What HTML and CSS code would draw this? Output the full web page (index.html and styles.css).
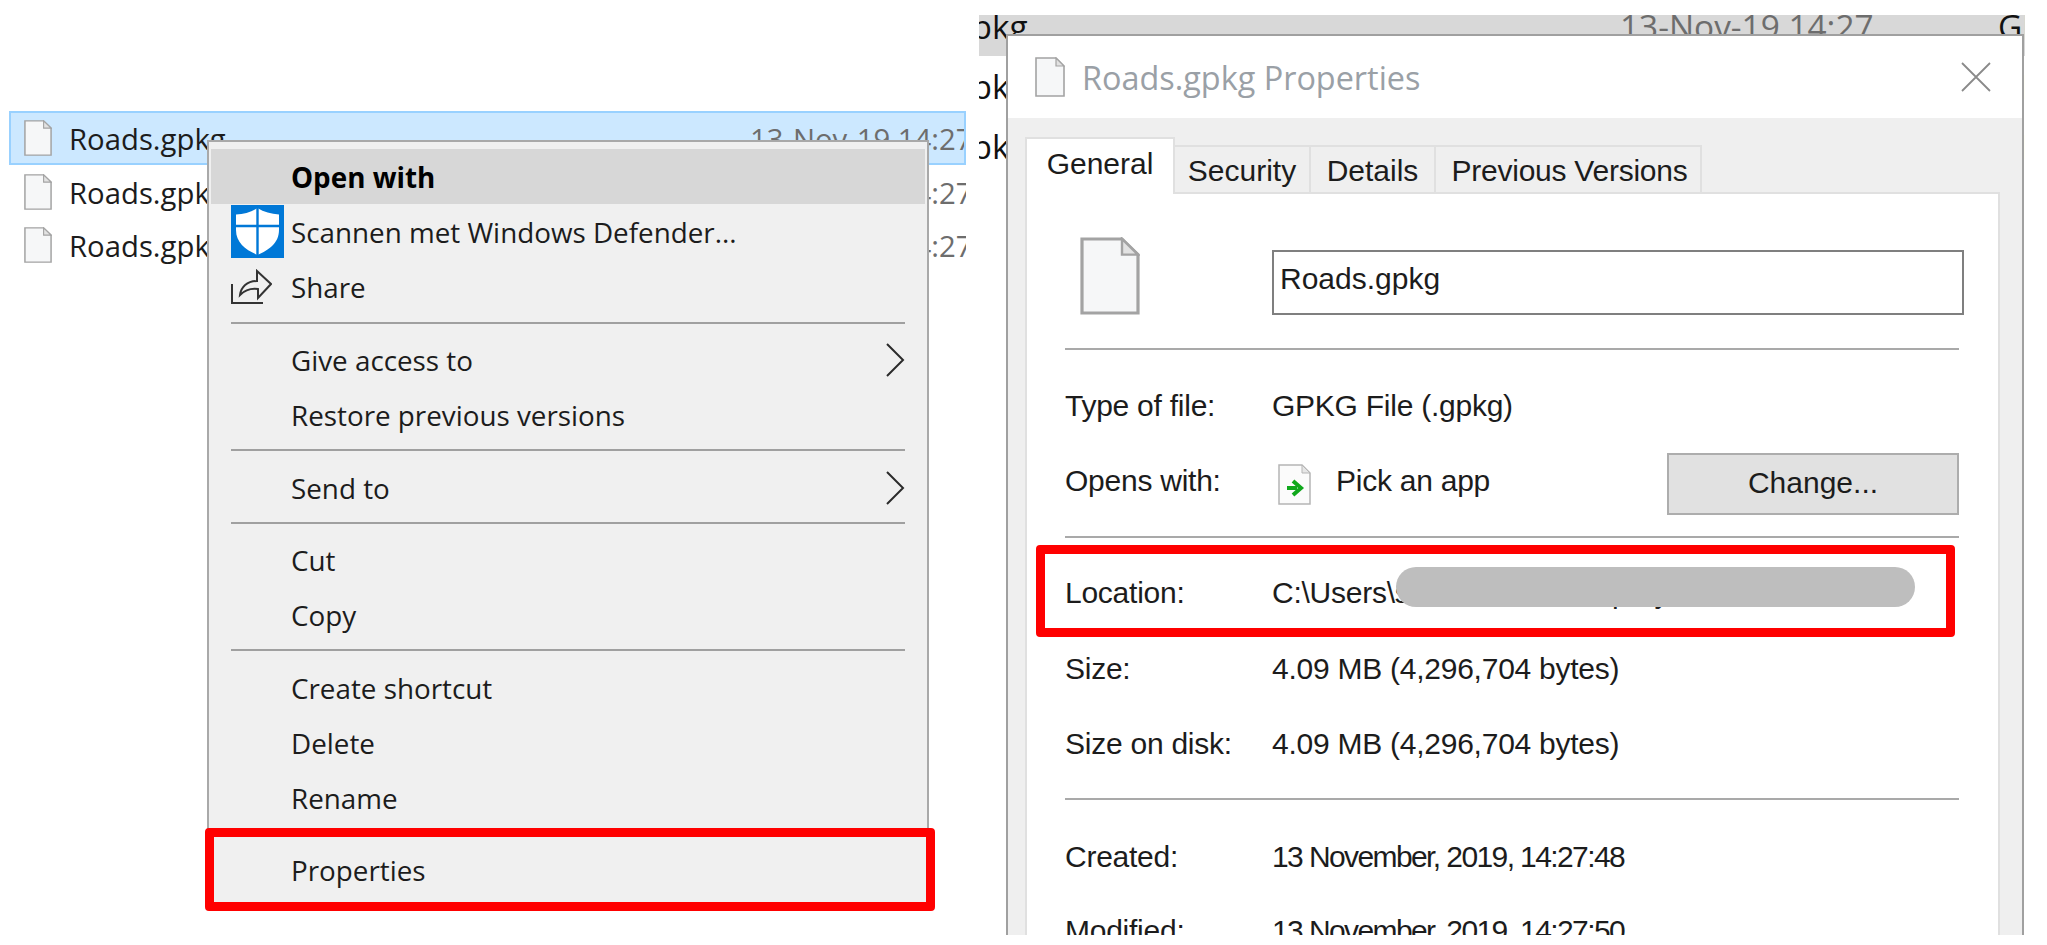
FILE: index.html
```html
<!DOCTYPE html>
<html lang="en">
<head>
<meta charset="utf-8">
<title>Roads.gpkg Properties</title>
<link rel="stylesheet" href="styles.css">
</head>
<body>
<svg class="defs" width="0" height="0" aria-hidden="true">
  <symbol id="page" viewBox="0 0 30 40" preserveAspectRatio="none">
    <path d="M1 1H21L29 9V39H1Z" fill="#f6f7f8" stroke="#a3a3a3" stroke-width="1.6"/>
    <path d="M21 1V9H29Z" fill="#e2e2e2" stroke="#a3a3a3" stroke-width="1.2"/>
  </symbol>
  <symbol id="chev" viewBox="0 0 20 34">
    <path d="M2 1L18 17L2 33" fill="none" stroke="#2b2b2b" stroke-width="2"/>
  </symbol>
</svg>
<main class="stage">
  <section class="shot-left">
    <div class="file-list">
      <div class="file-row selected">
        <svg class="file-icon"><use href="#page"/></svg>
        <span class="file-name">Roads.gpkg</span>
        <span class="file-date">13-Nov-19 14:27</span>
      </div>
      <div class="file-row">
        <svg class="file-icon"><use href="#page"/></svg>
        <span class="file-name">Roads.gpkg</span>
        <span class="file-date">13-Nov-19 14:27</span>
      </div>
      <div class="file-row">
        <svg class="file-icon"><use href="#page"/></svg>
        <span class="file-name">Roads.gpkg</span>
        <span class="file-date">13-Nov-19 14:27</span>
      </div>
    </div>
    <div class="menu">
      <div class="item active"><span class="gutter"></span><b>Open with</b></div>
      <div class="item"><span class="gutter">
        <svg class="shield" viewBox="0 0 53 53"><rect width="53" height="53" fill="#0078d7"/><path d="M26.5 3C20 7 13 9 5 9.500V25C5 38 15 45 26.500 50C38 45 48 38 48 25V9.500C40 9 33 7 26.500 3Z" fill="#fff"/><path d="M26.500 3V50M5 21H48" stroke="#0078d7" stroke-width="2.400" fill="none"/></svg>
      </span>Scannen met Windows Defender...</div>
      <div class="item"><span class="gutter">
        <svg class="share" viewBox="0 0 41 36"><path d="M1 15V34H32" fill="none" stroke="#333" stroke-width="2"/><path d="M9 26C10 18 16 12 26 12V2L40 15L27 29V20C20 19 14 21 9 26Z" fill="none" stroke="#333" stroke-width="2"/></svg>
      </span>Share</div>
      <div class="sep sep-tight"></div>
      <div class="item"><span class="gutter"></span>Give access to<svg class="chevron"><use href="#chev"/></svg></div>
      <div class="item"><span class="gutter"></span>Restore previous versions</div>
      <div class="sep"></div>
      <div class="item"><span class="gutter"></span>Send to<svg class="chevron"><use href="#chev"/></svg></div>
      <div class="sep sep-close"></div>
      <div class="item"><span class="gutter"></span>Cut</div>
      <div class="item"><span class="gutter"></span>Copy</div>
      <div class="sep"></div>
      <div class="item"><span class="gutter"></span>Create shortcut</div>
      <div class="item"><span class="gutter"></span>Delete</div>
      <div class="item"><span class="gutter"></span>Rename</div>
      <div class="sep sep-close"></div>
      <div class="item"><span class="gutter"></span>Properties</div>
    </div>
    <div class="callout callout-menu"></div>
  </section>

  <section class="shot-right">
    <div class="back-list">
      <div class="back-row active"><span class="back-name">Roads.gpkg</span><span class="back-date">13-Nov-19 14:27</span><span>GPKG File</span></div>
      <div class="back-row"><span class="back-name">Roads.gpkg</span><span class="back-date">13-Nov-19 14:27</span><span>GPKG File</span></div>
      <div class="back-row"><span class="back-name">Roads.gpkg</span><span class="back-date">13-Nov-19 14:27</span><span>GPKG File</span></div>
    </div>
    <div class="dialog">
      <header class="titlebar">
        <svg class="title-icon"><use href="#page"/></svg>
        <span class="title-text">Roads.gpkg Properties</span>
        <svg class="close" viewBox="0 0 30 30"><path d="M1 1L29 29M29 1L1 29" stroke="#8a8a8a" stroke-width="1.800" fill="none"/></svg>
      </header>
      <div class="body">
        <nav class="tabs">
          <span class="tab current">General</span>
          <span class="tab tab-security">Security</span>
          <span class="tab tab-details">Details</span>
          <span class="tab tab-previous">Previous Versions</span>
        </nav>
        <div class="panel">
          <div class="row head">
            <span class="big-icon-cell"><svg class="big-icon"><use href="#page"/></svg></span>
            <span class="name-box">Roads.gpkg</span>
          </div>
          <div class="rule rule-a"></div>
          <div class="row type-row"><span>Type of file:</span><span>GPKG File (.gpkg)</span></div>
          <div class="row opens-row">
            <span class="opens-label">Opens with:</span>
            <span class="opens-value">
              <svg class="app-icon" viewBox="0 0 33 42"><path d="M1 1H24L32 9V40H1Z" fill="#fbfbfb" stroke="#b5b5b5" stroke-width="1.500"/><path d="M24 1V9H32Z" fill="#e6e6e6" stroke="#b5b5b5"/><path d="M9 24H19M15 17L23 24L15 31" fill="none" stroke="#10a81c" stroke-width="4"/></svg>
              <span class="app-name">Pick an app</span>
            </span>
            <span class="change">Change...</span>
          </div>
          <div class="rule rule-b"></div>
          <div class="row loc-row"><span>Location:</span><span>C:\Users\s<span class="tail">proy</span></span></div>
          <div class="row size-row"><span>Size:</span><span>4.09 MB (4,296,704 bytes)</span></div>
          <div class="row disk-row"><span>Size on disk:</span><span>4.09 MB (4,296,704 bytes)</span></div>
          <div class="rule rule-c"></div>
          <div class="row created-row"><span>Created:</span><span class="stamp">13 November, 2019, 14:27:48</span></div>
          <div class="row modified-row"><span>Modified:</span><span class="stamp">13 November, 2019, 14:27:50</span></div>
        </div>
      </div>
      <div class="blur-mask"></div>
      <div class="callout callout-loc"></div>
    </div>
  </section>
</main>
</body>
</html>
```

FILE: styles.css
```css
* { box-sizing: border-box; }
html, body { margin: 0; padding: 0; background: #fff; }
body { width: 2047px; height: 945px; overflow: hidden; color: #1c1c1c; }
.defs { position: absolute; }
.stage { display: flex; width: 2047px; height: 945px; }

/* left capture */
.shot-left {
  position: relative;
  flex: none;
  width: 979px;
  height: 945px;
  padding: 111px 0 0 9px;
  font-family: "Open Sans", "Noto Sans", sans-serif;
  font-size: 27.8px;
}
.file-list { width: 957px; }
.file-row {
  display: flex;
  align-items: center;
  height: 53px;
  padding: 2px 0 0 15px;
  overflow: hidden;
  white-space: nowrap;
  font-size: 29.3px;
}
.file-row.selected {
  height: 54px;
  background: #cce8ff;
  border: 2px solid #99d1ff;
  padding: 2px 0 0 13px;
}
.file-icon { flex: none; width: 28px; height: 36px; margin: -2px 17px 0 0; }
.file-name { flex: none; width: 681px; }
.file-date { flex: none; color: #6d6d6d; }

.menu {
  position: absolute;
  left: 207px;
  top: 140px;
  width: 722px;
  height: 766px;
  padding: 7px 2px 0;
  background: #f0f0f0;
  border: 2px solid #a9a9a9;
}
.item {
  display: flex;
  align-items: center;
  height: 55px;
  padding: 0 20px;
  white-space: nowrap;
}
.item.active { background: #d7d7d7; color: #000; }
.item b { font-weight: 700; }
.gutter { display: flex; align-items: center; flex: none; width: 60px; }
.shield { width: 53px; height: 53px; display: block; }
.share { width: 41px; height: 36px; display: block; }
.chevron { width: 20px; height: 34px; margin-left: auto; }
.sep { height: 2px; margin: 7px 20px 9px; background: #a0a0a0; }
.sep-tight { margin-top: 8px; margin-bottom: 8px; }
.sep-close { margin-bottom: 8px; }

.callout {
  position: absolute;
  border: 9px solid #f00;
  border-radius: 4px;
}
.callout-menu { left: 205px; top: 828px; width: 730px; height: 83px; }

/* right capture */
.shot-right {
  position: relative;
  flex: none;
  width: 1068px;
  height: 945px;
  padding-top: 15px;
  font-family: "Liberation Sans", Arial, sans-serif;
  font-size: 30px;
}
.back-list {
  width: 1046px;
  height: 180px;
  overflow: hidden;
  font-family: "Open Sans", "Noto Sans", sans-serif;
  font-size: 33.4px;
  color: #111;
}
.back-row {
  display: flex;
  height: 60px;
  line-height: 22px;
  white-space: nowrap;
}
.back-row.active { height: 41px; margin-bottom: 19px; background: #d8d8d8; }
.back-name { flex: none; width: 771px; margin-left: -130px; }
.back-date { flex: none; width: 378px; color: #6d6d6d; }

.dialog {
  position: absolute;
  left: 27px;
  top: 34px;
  width: 1018px;
  height: 901px;
  overflow: hidden;
  background: #fff;
  border: 2px solid #a0a0a0;
  border-bottom: 0;
}
.titlebar {
  display: flex;
  align-items: center;
  height: 82px;
  padding-left: 27px;
}
.title-icon { flex: none; width: 30px; height: 40px; margin-right: 17px; }
.title-text {
  font-family: "Open Sans", "Noto Sans", sans-serif;
  font-size: 32.4px;
  color: #9aa0a6;
  white-space: nowrap;
}
.close { flex: none; width: 30px; height: 30px; margin-left: auto; margin-right: 31px; }
.body {
  height: 817px;
  padding: 19px 22px 0 17px;
  background: #efefef;
}
.tabs { display: flex; align-items: flex-end; height: 57px; position: relative; z-index: 1; }
.tab {
  height: 49px;
  line-height: 47px;
  text-align: center;
  background: #efefef;
  border: 2px solid #e0e0e0;
  border-left: 0;
  white-space: nowrap;
}
.tab.current {
  width: 150px;
  height: 57px;
  line-height: 50px;
  background: #fff;
  border: 2px solid #e0e0e0;
  border-bottom: 0;
}
.tab-security { width: 136px; }
.tab-details { width: 125px; }
.tab-previous { width: 266px; padding-left: 3px; letter-spacing: -.25px; }
.panel {
  height: 760px;
  margin-top: -2px;
  padding: 43px 39px 0 38px;
  background: #fff;
  border: 2px solid #e0e0e0;
  border-bottom: 0;
}
.row {
  display: grid;
  grid-template-columns: 207px 1fr;
  height: 40px;
  line-height: 40px;
  white-space: nowrap;
  letter-spacing: -.25px;
}
.head { height: 78px; align-items: end; margin-right: -5px; letter-spacing: 0; }
.big-icon-cell { display: block; padding-left: 15px; line-height: 0; }
.big-icon { width: 60px; height: 78px; }
.name-box {
  height: 65px;
  line-height: 53px;
  padding-left: 6px;
  border: 2px solid #7f7f7f;
}
.rule { height: 2px; background: #a9a9a9; }
.rule-a { margin-top: 33px; }
.type-row { margin-top: 36px; }
.opens-row {
  display: flex;
  height: 62px;
  margin-top: 27px;
}
.opens-label { flex: none; width: 207px; margin-top: 8px; }
.opens-value { display: flex; flex: none; }
.app-icon { flex: none; width: 33px; height: 42px; margin: 11px 25px 0 6px; }
.app-name { margin-top: 8px; }
.change {
  flex: none;
  width: 292px;
  height: 62px;
  line-height: 56px;
  margin-left: auto;
  text-align: center;
  background: #e1e1e1;
  border: 2px solid #adadad;
  letter-spacing: 0;
}
.rule-b { margin-top: 21px; }
.loc-row { position: relative; margin-top: 35px; }
.tail { position: absolute; left: 547px; }
.size-row { margin-top: 36px; }
.disk-row { margin-top: 35px; }
.rule-c { margin-top: 34px; }
.created-row { margin-top: 37px; }
.modified-row { margin-top: 34px; }
.stamp { letter-spacing: -1.6px; }

.blur-mask {
  position: absolute;
  left: 388px;
  top: 531px;
  width: 519px;
  height: 40px;
  background: #bebebe;
  border-radius: 20px;
}
.callout-loc { left: 28px; top: 509px; width: 919px; height: 92px; }
```
